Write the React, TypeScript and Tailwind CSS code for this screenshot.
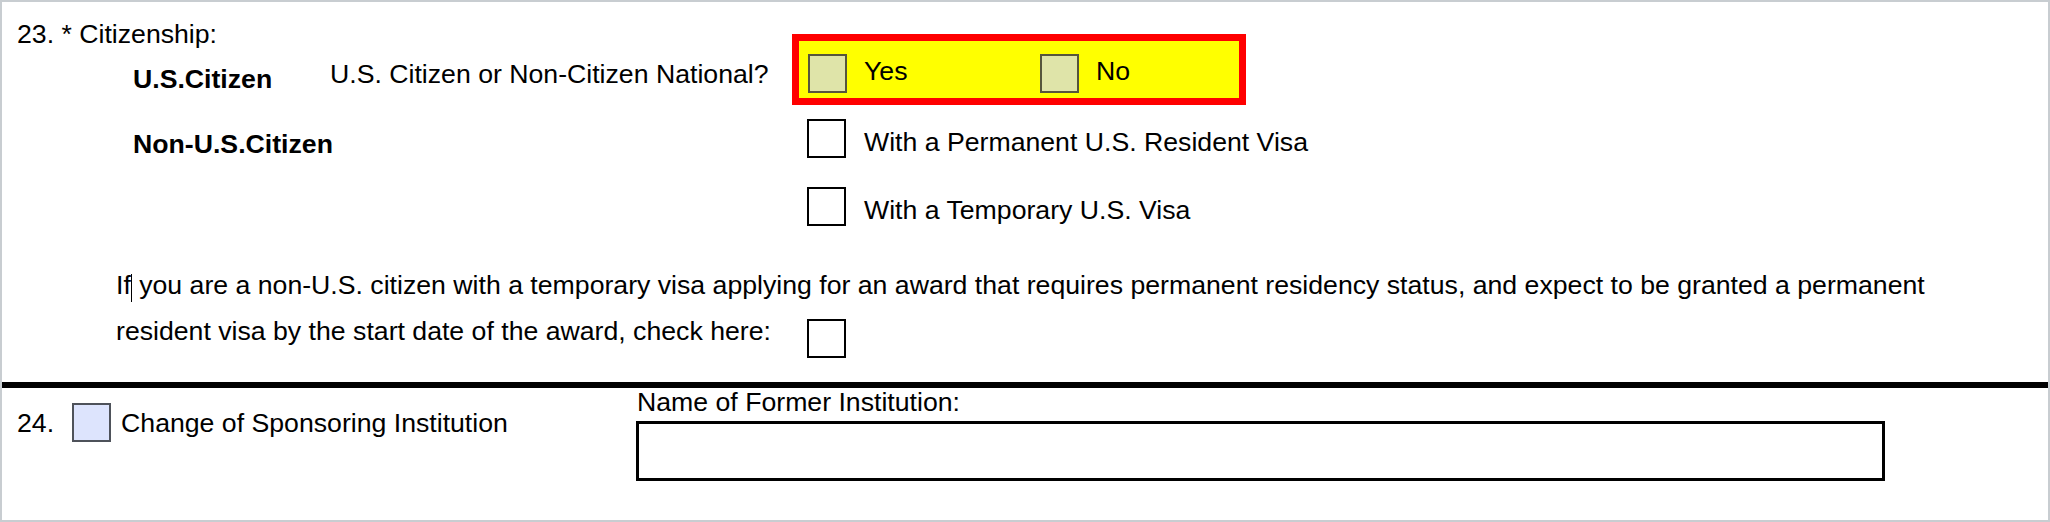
import * as React from "react"

// checkbox square drawn as a plain box, colours differ per field
function Box({ className }: { className: string }) {
  return <div className={"h-[39px] w-[39px] shrink-0 border-2 " + className} />
}

function Option({ label, top = "mt-[10px]" }: { label: string; top?: string }) {
  return (
    <div className="flex items-start">
      <Box className="border-black bg-white" />
      <span className={"ml-[18px] whitespace-nowrap " + top}>{label}</span>
    </div>
  )
}

export default function App() {
  return (
    <div className="h-[522px] w-[2050px] border-2 border-[#c8cdd1] bg-white font-['Liberation_Sans',Arial,sans-serif] text-[26.67px] leading-none text-black">
      {/* 23. Citizenship */}
      <div className="h-[380px]">
        <div className="flex items-start">
          <div className="w-[790px]">
            <div className="pl-[15px] pt-[19px]">23. * Citizenship:</div>
            <div className="mt-[13px] flex items-start pl-[131px]">
              <span className="mt-[5px] w-[197px] font-bold">U.S.Citizen</span>
              <span className="whitespace-nowrap">U.S. Citizen or Non-Citizen National?</span>
            </div>
            <div className="mt-[39px] pl-[131px] font-bold">Non-U.S.Citizen</div>
          </div>

          <div className="pt-[32px]">
            <div className="flex h-[71px] w-[454px] items-start border-[7px] border-[#ff0000] bg-[#ffff00] pl-[9px] pt-[13px]">
              <div className="flex w-[232px] items-start">
                <Box className="border-[#56563c] bg-[#dfe4a9]" />
                <span className="ml-[17px] mt-[4px]">Yes</span>
              </div>
              <div className="flex items-start">
                <Box className="border-[#56563c] bg-[#dfe4a9]" />
                <span className="ml-[17px] mt-[4px]">No</span>
              </div>
            </div>
            <div className="mt-[14px] pl-[15px]">
              <Option label="With a Permanent U.S. Resident Visa" />
              <div className="mt-[29px]">
                <Option label="With a Temporary U.S. Visa" />
              </div>
            </div>
          </div>
        </div>

        <p className="mt-[36px] whitespace-nowrap pl-[114px] leading-[46px]">
          If<span className="inline-block h-[28px] w-px bg-black align-[-8px]" /> you are a non-U.S. citizen with a
          temporary visa applying for an award that requires permanent residency status, and expect to be granted a
          permanent
          <br />
          resident visa by the start date of the award, check here:
          <span className="ml-[36px] inline-block h-[39px] w-[39px] border-2 border-black align-[-18px]" />
        </p>
      </div>

      <div className="h-[6px] bg-black" />

      {/* 24. Sponsoring institution */}
      <div className="flex h-[132px] items-start">
        <div className="flex w-[634px] items-start pl-[15px] pt-[15px]">
          <span className="mt-[7px]">24.</span>
          <Box className="ml-[18px] border-[#4e525a] bg-[#dde4fd]" />
          <span className="ml-[10px] mt-[7px] whitespace-nowrap">Change of Sponsoring Institution</span>
        </div>
        <div>
          <div className="pl-px pt-px">Name of Former Institution:</div>
          <div className="mt-[5px] h-[60px] w-[1249px] border-[3px] border-black" />
        </div>
      </div>
    </div>
  )
}
